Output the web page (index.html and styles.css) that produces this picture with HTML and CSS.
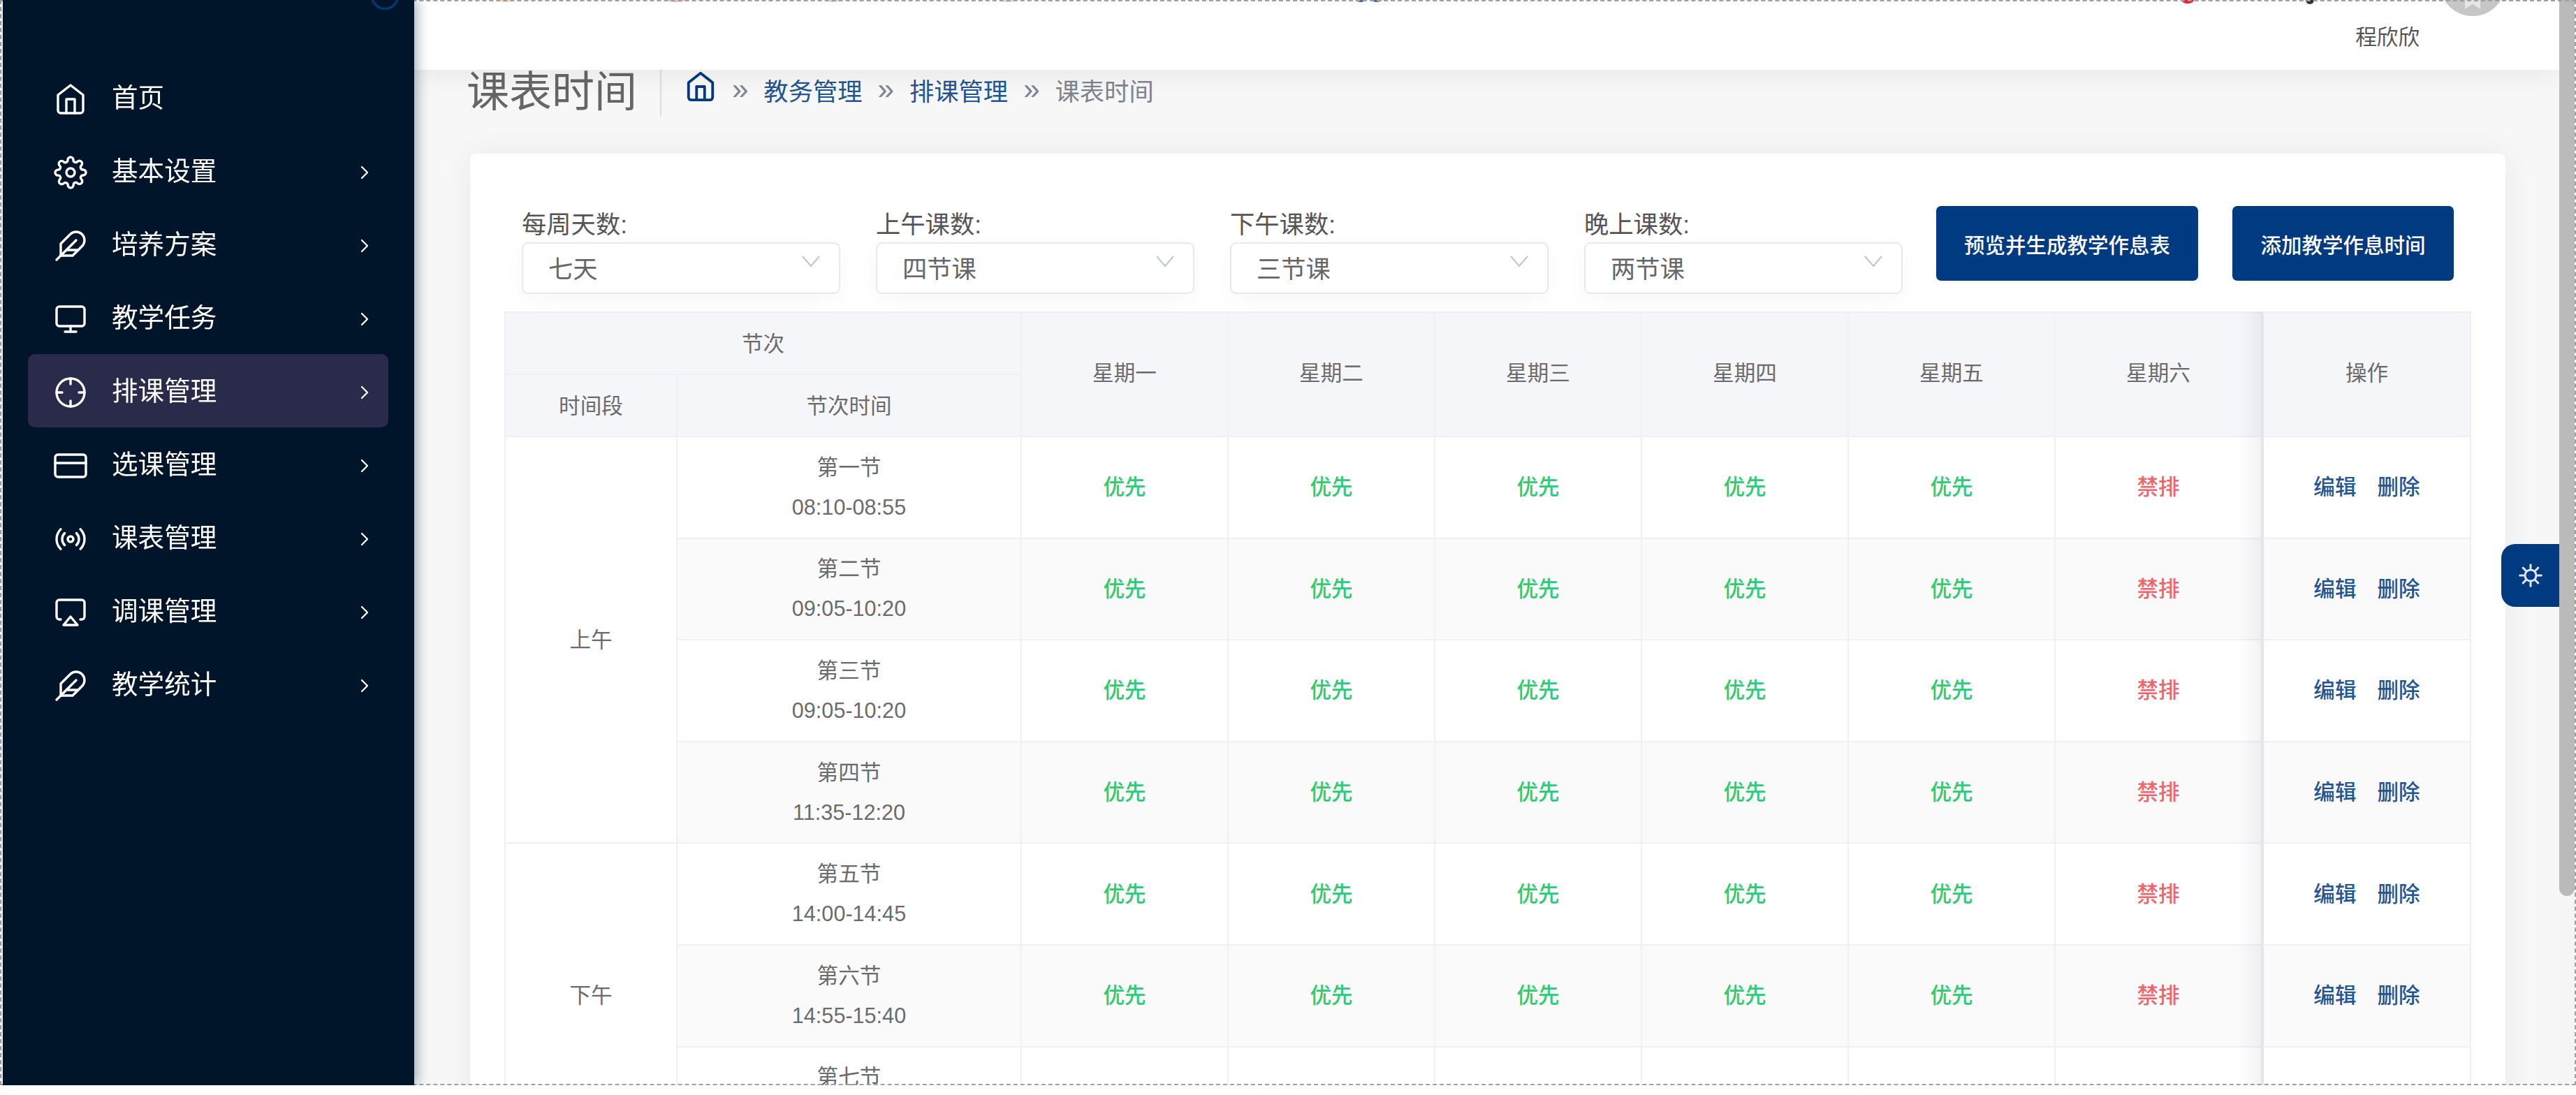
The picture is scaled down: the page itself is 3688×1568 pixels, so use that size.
FILE: index.html
```html
<!DOCTYPE html>
<html lang="zh-CN">
<head>
<meta charset="utf-8">
<title>课表时间</title>
<link rel="stylesheet" href="styles.css">
</head>
<body>
<div class="window">
  <aside class="sidebar">
    <span class="logo-peek"></span>
    <nav class="menu">
      <a class="item">
        <svg class="ico" viewBox="0 0 24 24"><path d="M3 9l9-7 9 7v11a2 2 0 0 1-2 2H5a2 2 0 0 1-2-2z"/><polyline points="9 22 9 12 15 12 15 22"/></svg>
        <span class="label">首页</span>
      </a>
      <a class="item">
        <svg class="ico" viewBox="0 0 24 24"><circle cx="12" cy="12" r="3"/><path d="M19.4 15a1.65 1.65 0 0 0 .33 1.82l.06.06a2 2 0 0 1 0 2.83 2 2 0 0 1-2.83 0l-.06-.06a1.65 1.65 0 0 0-1.82-.33 1.65 1.65 0 0 0-1 1.51V21a2 2 0 0 1-2 2 2 2 0 0 1-2-2v-.09A1.65 1.65 0 0 0 9 19.4a1.65 1.65 0 0 0-1.82.33l-.06.06a2 2 0 0 1-2.83 0 2 2 0 0 1 0-2.83l.06-.06a1.65 1.65 0 0 0 .33-1.82 1.65 1.65 0 0 0-1.51-1H3a2 2 0 0 1-2-2 2 2 0 0 1 2-2h.09A1.65 1.65 0 0 0 4.6 9a1.65 1.65 0 0 0-.33-1.82l-.06-.06a2 2 0 0 1 0-2.83 2 2 0 0 1 2.83 0l.06.06a1.65 1.65 0 0 0 1.82.33H9a1.65 1.65 0 0 0 1-1.51V3a2 2 0 0 1 2-2 2 2 0 0 1 2 2v.09a1.65 1.65 0 0 0 1 1.51 1.65 1.65 0 0 0 1.82-.33l.06-.06a2 2 0 0 1 2.83 0 2 2 0 0 1 0 2.83l-.06.06a1.65 1.65 0 0 0-.33 1.82V9a1.65 1.65 0 0 0 1.51 1H21a2 2 0 0 1 2 2 2 2 0 0 1-2 2h-.09a1.65 1.65 0 0 0-1.51 1z"/></svg>
        <span class="label">基本设置</span>
        <svg class="chev" viewBox="0 0 24 24"><polyline points="9 18 15 12 9 6"/></svg>
      </a>
      <a class="item">
        <svg class="ico" viewBox="0 0 24 24"><path d="M20.24 12.24a6 6 0 0 0-8.49-8.49L5 10.5V19h8.5z"/><line x1="16" y1="8" x2="2" y2="22"/><line x1="17.5" y1="15" x2="9" y2="15"/></svg>
        <span class="label">培养方案</span>
        <svg class="chev" viewBox="0 0 24 24"><polyline points="9 18 15 12 9 6"/></svg>
      </a>
      <a class="item">
        <svg class="ico" viewBox="0 0 24 24"><rect x="2" y="3" width="20" height="14" rx="2" ry="2"/><line x1="8" y1="21" x2="16" y2="21"/><line x1="12" y1="17" x2="12" y2="21"/></svg>
        <span class="label">教学任务</span>
        <svg class="chev" viewBox="0 0 24 24"><polyline points="9 18 15 12 9 6"/></svg>
      </a>
      <a class="item active">
        <svg class="ico" viewBox="0 0 24 24"><circle cx="12" cy="12" r="10"/><line x1="22" y1="12" x2="18" y2="12"/><line x1="6" y1="12" x2="2" y2="12"/><line x1="12" y1="6" x2="12" y2="2"/><line x1="12" y1="22" x2="12" y2="18"/></svg>
        <span class="label">排课管理</span>
        <svg class="chev" viewBox="0 0 24 24"><polyline points="9 18 15 12 9 6"/></svg>
      </a>
      <a class="item">
        <svg class="ico" viewBox="0 0 24 24"><rect x="1" y="4" width="22" height="16" rx="2" ry="2"/><line x1="1" y1="10" x2="23" y2="10"/></svg>
        <span class="label">选课管理</span>
        <svg class="chev" viewBox="0 0 24 24"><polyline points="9 18 15 12 9 6"/></svg>
      </a>
      <a class="item">
        <svg class="ico" viewBox="0 0 24 24"><circle cx="12" cy="12" r="2"/><path d="M16.24 7.76a6 6 0 0 1 0 8.49m-8.48-.01a6 6 0 0 1 0-8.49m11.31-2.82a10 10 0 0 1 0 14.14m-14.14 0a10 10 0 0 1 0-14.14"/></svg>
        <span class="label">课表管理</span>
        <svg class="chev" viewBox="0 0 24 24"><polyline points="9 18 15 12 9 6"/></svg>
      </a>
      <a class="item">
        <svg class="ico" viewBox="0 0 24 24"><path d="M5 17H4a2 2 0 0 1-2-2V5a2 2 0 0 1 2-2h16a2 2 0 0 1 2 2v10a2 2 0 0 1-2 2h-1"/><polygon points="12 15 17 21 7 21 12 15"/></svg>
        <span class="label">调课管理</span>
        <svg class="chev" viewBox="0 0 24 24"><polyline points="9 18 15 12 9 6"/></svg>
      </a>
      <a class="item">
        <svg class="ico" viewBox="0 0 24 24"><path d="M20.24 12.24a6 6 0 0 0-8.49-8.49L5 10.5V19h8.5z"/><line x1="16" y1="8" x2="2" y2="22"/><line x1="17.5" y1="15" x2="9" y2="15"/></svg>
        <span class="label">教学统计</span>
        <svg class="chev" viewBox="0 0 24 24"><polyline points="9 18 15 12 9 6"/></svg>
      </a>
    </nav>
  </aside>

  <main class="main">
    <header class="topbar">
      <span class="peek peek-orange"></span>
      <span class="peek peek-pink"></span>
      <span class="peek peek-lav1"></span>
      <span class="peek peek-lav2"></span>
      <span class="peek peek-blue1"></span>
      <span class="peek peek-blue2"></span>
      <span class="peek peek-red"></span>
      <span class="peek peek-dark"></span>
      <span class="avatar"><span class="avatar-mark"></span></span>
      <span class="username">程欣欣</span>
    </header>

    <div class="page-head">
      <h1 class="page-title">课表时间</h1>
      <div class="crumbs">
        <svg class="crumb-home" viewBox="0 0 24 24"><path d="M3 9l9-7 9 7v11a2 2 0 0 1-2 2H5a2 2 0 0 1-2-2z"/><polyline points="9 22 9 12 15 12 15 22"/></svg>
        <span class="crumb-sep">»</span>
        <a class="crumb-link">教务管理</a>
        <span class="crumb-sep">»</span>
        <a class="crumb-link">排课管理</a>
        <span class="crumb-sep">»</span>
        <span class="crumb-now">课表时间</span>
      </div>
    </div>

    <section class="card">
      <div class="toolbar">
        <div class="filters">
          <div class="filter">
            <label class="filter-label">每周天数:</label>
            <div class="select"><span>七天</span><svg class="select-arrow" viewBox="0 0 26 16"><polyline points="1 1 13 15 25 1"/></svg></div>
          </div>
          <div class="filter">
            <label class="filter-label">上午课数:</label>
            <div class="select"><span>四节课</span><svg class="select-arrow" viewBox="0 0 26 16"><polyline points="1 1 13 15 25 1"/></svg></div>
          </div>
          <div class="filter">
            <label class="filter-label">下午课数:</label>
            <div class="select"><span>三节课</span><svg class="select-arrow" viewBox="0 0 26 16"><polyline points="1 1 13 15 25 1"/></svg></div>
          </div>
          <div class="filter">
            <label class="filter-label">晚上课数:</label>
            <div class="select"><span>两节课</span><svg class="select-arrow" viewBox="0 0 26 16"><polyline points="1 1 13 15 25 1"/></svg></div>
          </div>
        </div>
        <div class="actions">
          <button class="btn btn-wide">预览并生成教学作息表</button>
          <button class="btn btn-narrow">添加教学作息时间</button>
        </div>
      </div>

      <div class="grid-wrap">
        <table class="grid">
          <colgroup>
            <col class="c-period"><col class="c-time">
            <col class="c-day"><col class="c-day"><col class="c-day"><col class="c-day"><col class="c-day"><col class="c-day">
            <col class="c-op">
          </colgroup>
          <thead>
            <tr>
              <th colspan="2">节次</th>
              <th rowspan="2" class="tall">星期一</th><th rowspan="2" class="tall">星期二</th><th rowspan="2" class="tall">星期三</th><th rowspan="2" class="tall">星期四</th><th rowspan="2" class="tall">星期五</th><th rowspan="2" class="tall">星期六</th>
              <th rowspan="2" class="tall op">操作</th>
            </tr>
            <tr><th>时间段</th><th>节次时间</th></tr>
          </thead>
          <tbody>
            <tr>
              <td rowspan="4" class="period">上午</td>
              <td class="time">第一节<br>08:10-08:55</td>
              <td class="ok">优先</td><td class="ok">优先</td><td class="ok">优先</td><td class="ok">优先</td><td class="ok">优先</td><td class="no">禁排</td>
              <td class="op"><a class="act">编辑</a><a class="act">删除</a></td>
            </tr>
            <tr class="alt">
              <td class="time">第二节<br>09:05-10:20</td>
              <td class="ok">优先</td><td class="ok">优先</td><td class="ok">优先</td><td class="ok">优先</td><td class="ok">优先</td><td class="no">禁排</td>
              <td class="op"><a class="act">编辑</a><a class="act">删除</a></td>
            </tr>
            <tr>
              <td class="time">第三节<br>09:05-10:20</td>
              <td class="ok">优先</td><td class="ok">优先</td><td class="ok">优先</td><td class="ok">优先</td><td class="ok">优先</td><td class="no">禁排</td>
              <td class="op"><a class="act">编辑</a><a class="act">删除</a></td>
            </tr>
            <tr class="alt">
              <td class="time">第四节<br>11:35-12:20</td>
              <td class="ok">优先</td><td class="ok">优先</td><td class="ok">优先</td><td class="ok">优先</td><td class="ok">优先</td><td class="no">禁排</td>
              <td class="op"><a class="act">编辑</a><a class="act">删除</a></td>
            </tr>
            <tr>
              <td rowspan="3" class="period">下午</td>
              <td class="time">第五节<br>14:00-14:45</td>
              <td class="ok">优先</td><td class="ok">优先</td><td class="ok">优先</td><td class="ok">优先</td><td class="ok">优先</td><td class="no">禁排</td>
              <td class="op"><a class="act">编辑</a><a class="act">删除</a></td>
            </tr>
            <tr class="alt">
              <td class="time">第六节<br>14:55-15:40</td>
              <td class="ok">优先</td><td class="ok">优先</td><td class="ok">优先</td><td class="ok">优先</td><td class="ok">优先</td><td class="no">禁排</td>
              <td class="op"><a class="act">编辑</a><a class="act">删除</a></td>
            </tr>
            <tr>
              <td class="time">第七节<br>&nbsp;</td>
              <td></td><td></td><td></td><td></td><td></td><td></td>
              <td class="op"></td>
            </tr>
          </tbody>
        </table>
        <div class="fixed-shade"></div>
      </div>
    </section>

    <button class="settings-tab" aria-label="设置">
      <svg class="settings-ico" viewBox="0 0 40 40">
        <circle cx="20" cy="20" r="9.5"/>
        <path d="M20 2v6M20 32v6M2 20h6M32 20h6M7.3 7.3l4.2 4.2M28.5 28.5l4.2 4.2M7.3 32.7l4.2-4.2M28.5 11.5l4.2-4.2"/>
      </svg>
    </button>
  </main>

  <div class="scrollbar"><div class="thumb"></div></div>
  <div class="frame"></div>
</div>
</body>
</html>
```
FILE: styles.css
```css
* { box-sizing: border-box; }
html, body { margin: 0; padding: 0; }
body {
  width: 3688px;
  height: 1568px;
  overflow: hidden;
  background: #fff;
  font-family: "Liberation Sans", "Noto Sans CJK SC", sans-serif;
  color: #666;
}
.window {
  position: relative;
  display: flex;
  width: 3688px;
  height: 1554px;
  padding: 0 2px 0 4px;
  overflow: hidden;
  filter: blur(0.7px);
}

/* sidebar */
.sidebar {
  position: relative;
  z-index: 5;
  flex: 0 0 589px;
  background: #001529;
  padding-top: 87px;
  box-shadow: 5px 0 16px rgba(0, 21, 41, .32);
}
.logo-peek {
  position: absolute;
  left: 527px;
  top: -26px;
  width: 40px;
  height: 40px;
  border: 3px solid #003a80;
  border-radius: 50%;
}
.item {
  display: flex;
  align-items: center;
  height: 105px;
  margin: 0 37px 0 36px;
  padding: 0 18px 0 37px;
  border-radius: 10px;
  color: #fff;
  font-size: 37.6px;
}
.item.active { background: #2a2b4a; }
.ico {
  flex: none;
  width: 48px;
  height: 48px;
  margin-right: 35px;
  position: relative;
  top: 2px;
  fill: none;
  stroke: #fff;
  stroke-width: 1.7;
  stroke-linecap: round;
  stroke-linejoin: round;
}
.label { line-height: 44px; }
.chev {
  flex: none;
  width: 32px;
  height: 32px;
  margin-left: auto;
  position: relative;
  top: 2px;
  fill: none;
  stroke: #fff;
  stroke-width: 1.7;
  stroke-linecap: round;
  stroke-linejoin: round;
}

/* main */
.main {
  position: relative;
  flex: 1;
  min-width: 0;
  overflow: hidden;
  background: #f7f7f7;
}
.topbar {
  position: relative;
  z-index: 2;
  display: flex;
  justify-content: flex-end;
  align-items: center;
  height: 100px;
  padding-right: 200px;
  background: #fff;
  box-shadow: 0 6px 40px rgba(0, 0, 0, .07);
}
.username { font-size: 30.6px; color: #555; position: relative; top: 1px; }
.peek { position: absolute; top: -6px; width: 12px; height: 9px; border-radius: 50%; }
.peek-orange { left: 119px; width: 24px; background: #fbdcb8; }
.peek-pink { left: 360px; width: 30px; background: #f7bcc4; }
.peek-lav1 { left: 588px; width: 24px; background: #d2d6f2; }
.peek-lav2 { left: 838px; width: 24px; background: #d8d8f0; }
.peek-blue1 { left: 1347px; width: 16px; background: #3d6cab; }
.peek-blue2 { left: 1370px; width: 16px; background: #3d6cab; }
.peek-red { left: 2530px; width: 18px; height: 11px; background: #ee1a36; }
.peek-dark { left: 2708px; width: 12px; height: 12px; background: #333; }
.avatar {
  position: absolute;
  left: 2900px;
  top: -71px;
  width: 94px;
  height: 94px;
  border-radius: 50%;
  background: #c6c6c6;
}
.avatar-mark {
  position: absolute;
  left: 36px;
  bottom: 10px;
  width: 22px;
  height: 18px;
  background: #e6e6e6;
  clip-path: polygon(0 0, 100% 0, 100% 100%, 50% 60%, 0 100%);
}

.page-head {
  display: flex;
  align-items: flex-start;
  height: 67px;
  margin-bottom: 53px;
  padding-left: 75px;
}
.page-title {
  margin: 0;
  width: 279px;
  height: 67px;
  border-right: 2px solid #d9dde2;
  font-size: 61px;
  font-weight: 400;
  line-height: 64px;
  color: #666;
  white-space: nowrap;
}
.crumbs {
  display: flex;
  align-items: center;
  gap: 22px;
  height: 56px;
  padding-left: 33px;
  font-size: 35.3px;
  white-space: nowrap;
}
.crumb-home {
  width: 46px;
  height: 46px;
  position: relative;
  top: -4px;
  fill: none;
  stroke: #003a80;
  stroke-width: 2;
  stroke-linecap: round;
  stroke-linejoin: round;
}
.crumb-sep { color: #7c8694; font-size: 42px; line-height: 44px; }
.crumb-link { color: #245492; }
.crumb-now { color: #7f858c; }

.card {
  margin: 0 77px 0 80px;
  padding: 75px 51px 0 49px;
  height: 1500px;
  background: #fff;
  border-radius: 9px;
  box-shadow: 0 0 44px rgba(0, 0, 0, .06);
}
.toolbar {
  display: flex;
  height: 151px;
  padding: 0 23px 0 25px;
  justify-content: space-between;
}
.filters { display: flex; gap: 51px; }
.filter { width: 456px; }
.filter-label {
  display: block;
  height: 52px;
  font-size: 35.3px;
  line-height: 54px;
  color: #555;
}
.select {
  display: flex;
  align-items: center;
  justify-content: space-between;
  height: 74px;
  padding: 0 27px 0 36px;
  border: 2px solid #e8e8f0;
  border-radius: 9px;
  background: #fff;
  font-size: 35.3px;
  color: #666;
  box-shadow: 0 8px 30px rgba(0, 0, 0, .035);
}
.select span { position: relative; top: -2px; }
.select-arrow {
  width: 26px;
  height: 16px;
  margin-top: -20px;
  fill: none;
  stroke: #c0c4cc;
  stroke-width: 2;
}
.actions { display: flex; gap: 49px; }
.btn {
  height: 107px;
  padding: 0;
  border: 0;
  border-radius: 7px;
  background: #003a80;
  color: #fff;
  font-family: inherit;
  font-size: 29.5px;
  font-weight: 500;
}
.btn-wide { width: 375px; }
.btn-narrow { width: 317px; }

.grid-wrap { position: relative; width: 2814px; }
.grid {
  width: 2814px;
  table-layout: fixed;
  border-collapse: separate;
  border-spacing: 0;
  border-top: 2px solid #eef0f6;
  border-left: 2px solid #eef0f6;
  font-size: 30.6px;
  color: #6b6b6b;
}
.c-period { width: 246px; }
.c-time { width: 493px; }
.c-day { width: 296px; }
.c-op { width: 299px; }
.grid th, .grid td {
  padding: 0;
  text-align: center;
  border-right: 2px solid #eef0f6;
  border-bottom: 2px solid #eef0f6;
}
.grid th {
  height: 89px;
  padding-bottom: 4px;
  background: #f5f6fa;
  font-weight: 400;
}
.grid th.tall { padding-bottom: 8px; }
.grid td { height: 145.6px; line-height: 57px; background: #fff; }
.grid .alt td { background: #fafafa; }
.grid .ok { color: #2ecc71; font-weight: 500; }
.grid .no { color: #f0646a; font-weight: 500; }
.grid .op { border-left: 2px solid #e4e5ed; }
.fixed-shade {
  position: absolute;
  top: 0;
  bottom: 0;
  right: 297px;
  width: 34px;
  background: linear-gradient(to right, rgba(70, 70, 110, 0), rgba(70, 70, 110, .07));
  pointer-events: none;
}
.act { color: #245492; font-weight: 500; }
.act + .act { margin-left: 30px; }

.settings-tab {
  position: absolute;
  right: -1px;
  top: 779px;
  display: flex;
  align-items: center;
  justify-content: center;
  width: 84px;
  height: 90px;
  padding: 0;
  border: 0;
  border-radius: 20px 0 0 20px;
  background: #003a80;
  z-index: 3;
}
.settings-ico {
  width: 34px;
  height: 34px;
  fill: none;
  stroke: #dfe6f0;
  stroke-width: 3.6;
  stroke-linecap: round;
}

/* page scrollbar and capture frame */
.scrollbar {
  flex: 0 0 22px;
  background: #f5f5f5;
  position: relative;
  z-index: 3;
}
.thumb {
  height: 1283px;
  background: #bababa;
  border-radius: 0 0 11px 11px;
}
.frame {
  position: absolute;
  inset: 0;
  z-index: 4;
  border: 2px dashed #a0a0a0;
  pointer-events: none;
}
```
